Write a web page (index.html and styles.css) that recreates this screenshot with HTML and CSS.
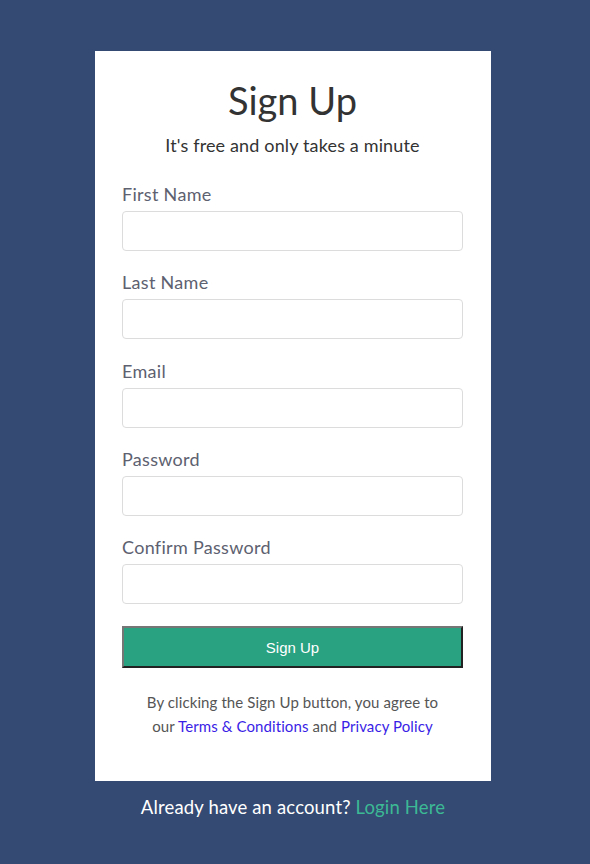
FILE: index.html
```html
<!DOCTYPE html>
<html lang="en">
<head>
<meta charset="utf-8">
<title>Sign Up</title>
<link rel="stylesheet" href="styles.css">
</head>
<body>
<div class="page">
  <form class="card">
    <h1 class="title">Sign Up</h1>
    <p class="subtitle">It's free and only takes a minute</p>
    <div class="field">
      <label class="label">First Name</label>
      <input class="input" type="text">
    </div>
    <div class="field">
      <label class="label">Last Name</label>
      <input class="input" type="text">
    </div>
    <div class="field">
      <label class="label">Email</label>
      <input class="input" type="email">
    </div>
    <div class="field">
      <label class="label">Password</label>
      <input class="input" type="password">
    </div>
    <div class="field">
      <label class="label">Confirm Password</label>
      <input class="input" type="password">
    </div>
    <button class="btn" type="button">Sign Up</button>
    <p class="terms">By clicking the Sign Up button, you agree to<br>our <a class="link" href="#">Terms &amp; Conditions</a> and <a class="link" href="#">Privacy Policy</a></p>
  </form>
  <p class="login">Already have an account? <a class="login-link" href="#">Login Here</a></p>
</div>
</body>
</html>
```
FILE: styles.css
```css
* { box-sizing: border-box; }
html, body { margin: 0; padding: 0; }
body {
  background: #344a72;
  font-family: "Lato", "Open Sans", sans-serif;
  height: 864px;
}
.page {
  width: 396px;
  margin: 51px 0 0 95px;
}
.card {
  background: #fff;
  padding: 26px 28px 43px 27px;
  display: flex;
  flex-direction: column;
}
.title {
  margin: 0;
  text-align: center;
  font-size: 38px;
  font-weight: 400;
  line-height: 46px;
  color: #333;
}
.subtitle {
  margin: 10px 0 0;
  text-align: center;
  font-size: 18px;
  line-height: 24px;
  letter-spacing: 0.15px;
  color: #333;
}
.field {
  display: flex;
  flex-direction: column;
  margin-top: 25px;
}
.field + .field { margin-top: 19.3px; }
.label {
  font-size: 18px;
  line-height: 24px;
  letter-spacing: 0.3px;
  color: #5d6170;
  margin-bottom: 5px;
}
.input {
  height: 40px;
  border: 1px solid #dcdcdc;
  border-radius: 4px;
  background: #fff;
  font: inherit;
  padding: 0 10px;
}
.btn {
  margin-top: 22px;
  height: 42px;
  background: #29a281;
  color: #fff;
  font-family: "Liberation Sans", Arial, sans-serif;
  font-size: 15px;
  border-width: 2px;
  border-style: solid;
  border-color: #767676 #222 #222 #767676;
}
.terms {
  margin: 22px 0 0;
  text-align: center;
  font-size: 15px;
  line-height: 24px;
  letter-spacing: 0.1px;
  color: #555;
}
.link { color: #3a1ee6; text-decoration: none; }
.login {
  margin: 14px 0 0;
  text-align: center;
  font-size: 18.5px;
  line-height: 24px;
  letter-spacing: 0.15px;
  color: #fff;
}
.login-link { color: #3cb995; text-decoration: none; }
```
